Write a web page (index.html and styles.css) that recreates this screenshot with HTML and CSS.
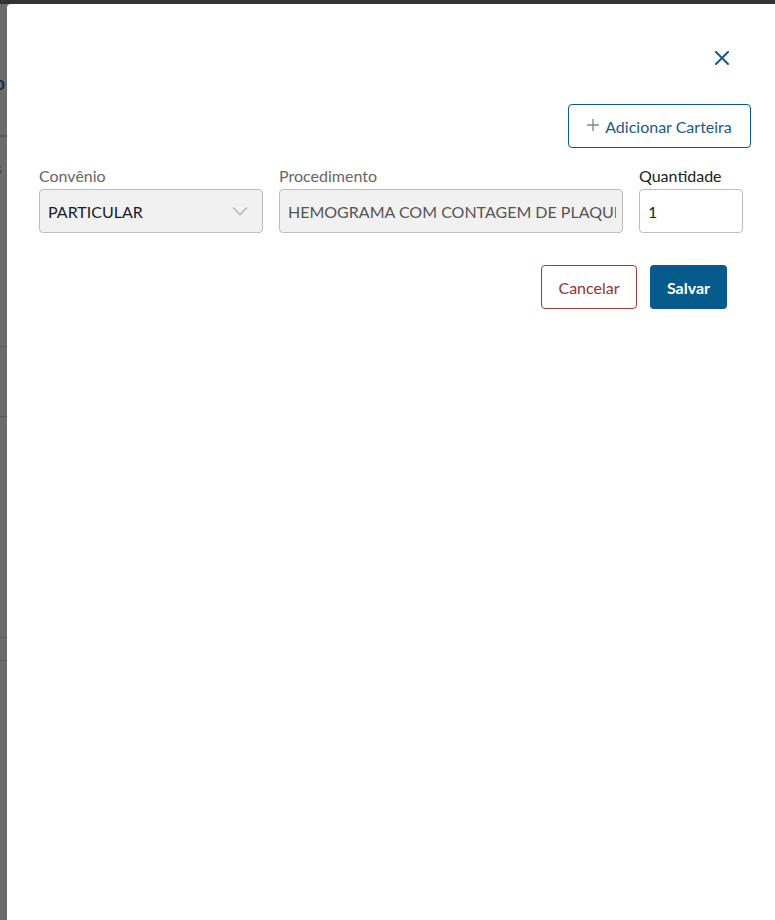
FILE: index.html
```html
<!DOCTYPE html>
<html lang="pt-BR">
<head>
  <meta charset="UTF-8">
  <meta name="viewport" content="width=device-width,initial-scale=1.0">
  <title>Adicionar procedimento</title>
  <link rel="stylesheet" href="styles.css">
</head>
<body>

  <!-- page behind the drawer -->
  <div class="topbar"></div>
  <div class="page">
    <div class="page-title">Agendamento</div>
    <div class="page-rule rule-1"></div>
    <div class="page-sub">Itens</div>
    <div class="page-rule rule-2"></div>
    <div class="page-rule rule-3"></div>
    <div class="page-rule rule-4"></div>
    <div class="page-rule rule-5"></div>
  </div>
  <div class="backdrop"></div>

  <!-- drawer -->
  <aside class="drawer">
    <div class="drawer-head">
      <button class="close" aria-label="Fechar">
        <svg width="14" height="14" viewBox="0 0 14 14"><path d="M1 1L13 13M13 1L1 13" stroke="#1b5a8a" stroke-width="2" stroke-linecap="square"/></svg>
      </button>
    </div>

    <div class="toolbar">
      <button class="btn-outline">
        <svg class="plus" width="12" height="12" viewBox="0 0 12 12"><path d="M6 0V12M0 6H12" stroke="#7f8a96" stroke-width="1.4"/></svg>
        Adicionar Carteira
      </button>
    </div>

    <div class="form-row">
      <div class="field f-conv">
        <label class="muted">Convênio</label>
        <div class="input disabled select">
          <span class="dark">PARTICULAR</span>
          <svg width="16" height="10" viewBox="0 0 16 10"><path d="M1 1.5L8 8.5L15 1.5" fill="none" stroke="#b9b9b9" stroke-width="1.6"/></svg>
        </div>
      </div>
      <div class="field f-proc">
        <label class="muted">Procedimento</label>
        <div class="input disabled proc"><span class="clip">HEMOGRAMA COM CONTAGEM DE PLAQUETAS</span></div>
      </div>
      <div class="field f-qtd">
        <label>Quantidade</label>
        <div class="input">1</div>
      </div>
    </div>

    <div class="actions">
      <button class="btn-cancel">Cancelar</button>
      <button class="btn-save">Salvar</button>
    </div>
  </aside>

</body>
</html>
```

FILE: styles.css
```css
*{box-sizing:border-box;margin:0;padding:0}
body{
  width:775px;
  height:920px;
  overflow:hidden;
  background:#fff;
  font-family:Lato,"Open Sans",sans-serif;
  position:relative;
}
button{font-family:inherit;cursor:pointer;background:none;border:none}

/* page behind */
.topbar{height:4px;background:#fff}
.page{padding:66px 0 0 0;position:relative}
.page-title{font-size:20px;color:#1b5a8a;margin-left:-118px}
.page-rule{height:2px;background:#d0d0d0;width:60px}
.rule-1{margin-top:41px}
.page-sub{font-size:15px;color:#aaa;margin:22px 0 0 -30px}
.rule-2{margin-top:169px;height:1px}
.rule-3{margin-top:69px;height:1px}
.rule-4{margin-top:220px;height:1px}
.rule-5{margin-top:22px;height:1px}
.backdrop{
  position:absolute;inset:0;
  background:rgba(0,0,0,.58);
  border-top:4px solid #333;
}

/* drawer */
.drawer{
  position:absolute;
  top:4px;left:7px;right:0;bottom:0;
  background:#fff;
  border-top-left-radius:4px;
  padding:42px 24px 0 32px;
}
.drawer-head{display:flex;justify-content:flex-end}
.close{
  width:24px;height:24px;
  display:flex;align-items:center;justify-content:center;
  margin-right:17px;
}
.toolbar{
  display:flex;justify-content:flex-end;
  margin-top:34px;
}
.btn-outline{
  height:44px;
  width:183px;
  border:1px solid #0b5a8e;
  border-radius:4px;
  color:#1b5a8a;
  font-size:16px;
  display:flex;align-items:center;justify-content:center;
  gap:6px;
}
.plus{margin-top:-2px}

/* form */
.form-row{
  display:flex;gap:16px;
  margin-top:18px;
}
.field label{
  display:block;
  font-size:16px;
  line-height:19px;
  margin-bottom:4px;
  color:#222;
}
.field label.muted{color:#666}
.f-conv{width:224px}
.f-proc{width:344px}
.f-qtd{width:104px}
.input{
  height:44px;
  border:1px solid #bdbdbd;
  border-radius:4px;
  padding:0 8px;
  display:flex;align-items:center;
  font-size:16px;
  color:#222;
  background:#fff;
}
.input.disabled{background:#f1f1f1;color:#555}
.input.proc{padding-right:6px}
.input .dark{color:#1b1b2b}
.select{justify-content:space-between;padding-right:14px}
.clip{white-space:nowrap;overflow:hidden}

/* actions */
.actions{
  display:flex;justify-content:flex-end;
  gap:13px;
  margin-top:32px;
  padding-right:24px;
}
.btn-cancel{
  height:44px;width:96px;
  border:1px solid #a23a3a;
  border-radius:4px;
  color:#983232;
  font-size:16px;
}
.btn-save{
  height:44px;width:77px;
  background:#065a8c;
  border-radius:4px;
  color:#fff;
  font-size:16px;
  font-weight:700;
}
```
